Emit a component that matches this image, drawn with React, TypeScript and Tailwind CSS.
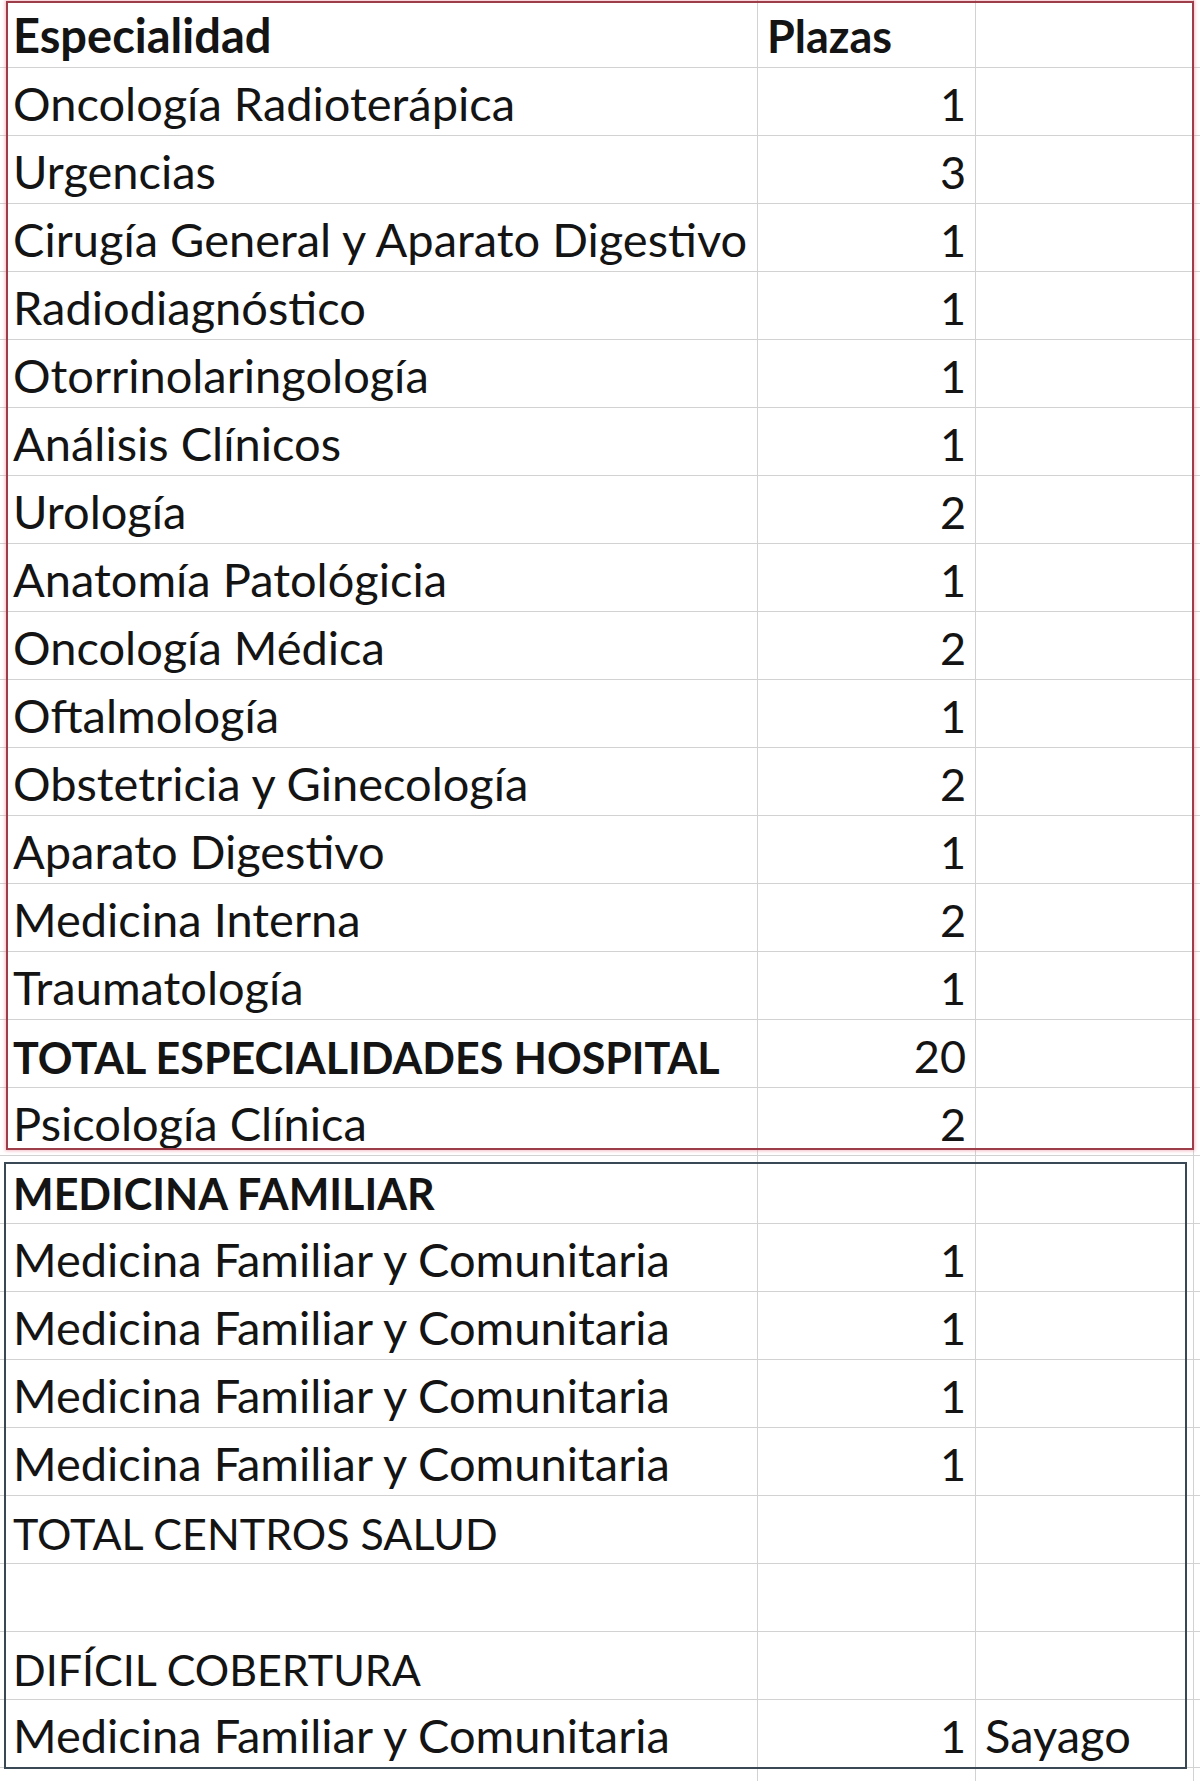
type Row = {
  label: string;
  plazas?: string;
  note?: string;
  bold?: boolean;
  caps?: boolean;
};

const rows: Row[] = [
  { label: "Especialidad", plazas: "Plazas", bold: true },
  { label: "Oncología Radioterápica", plazas: "1" },
  { label: "Urgencias", plazas: "3" },
  { label: "Cirugía General y Aparato Digestivo", plazas: "1" },
  { label: "Radiodiagnóstico", plazas: "1" },
  { label: "Otorrinolaringología", plazas: "1" },
  { label: "Análisis Clínicos", plazas: "1" },
  { label: "Urología", plazas: "2" },
  { label: "Anatomía Patológicia", plazas: "1" },
  { label: "Oncología Médica", plazas: "2" },
  { label: "Oftalmología", plazas: "1" },
  { label: "Obstetricia y Ginecología", plazas: "2" },
  { label: "Aparato Digestivo", plazas: "1" },
  { label: "Medicina Interna", plazas: "2" },
  { label: "Traumatología", plazas: "1" },
  { label: "TOTAL ESPECIALIDADES HOSPITAL", plazas: "20", bold: true, caps: true },
  { label: "Psicología Clínica", plazas: "2" },
  { label: "MEDICINA FAMILIAR", bold: true, caps: true },
  { label: "Medicina Familiar y Comunitaria", plazas: "1" },
  { label: "Medicina Familiar y Comunitaria", plazas: "1" },
  { label: "Medicina Familiar y Comunitaria", plazas: "1" },
  { label: "Medicina Familiar y Comunitaria", plazas: "1" },
  { label: "TOTAL CENTROS SALUD", caps: true },
  { label: "" },
  { label: "DIFÍCIL COBERTURA", caps: true },
  { label: "Medicina Familiar y Comunitaria", plazas: "1", note: "Sayago" },
];

function SheetRow({ row, isHeader }: { row: Row; isHeader: boolean }) {
  const weight = row.bold ? "font-bold" : "font-normal";
  const size = row.caps ? "text-[43px]" : "text-[47px]";
  return (
    <div className="grid grid-cols-[758px_218px_218px_6px] h-[68px] border-b border-[#d2d2d2]">
      <div
        className={`flex items-end pl-[13px] pb-[8px] border-r border-[#d2d2d2] whitespace-nowrap overflow-hidden ${weight} ${size}`}
      >
        {row.label}
      </div>
      <div
        className={`flex items-end pb-[8px] border-r border-[#d2d2d2] text-[45px] ${
          isHeader ? "justify-start pl-[9px] font-bold" : "justify-end pr-[9px]"
        }`}
      >
        {row.plazas}
      </div>
      <div className="flex items-end pl-[9px] pb-[8px] border-r border-[#d2d2d2] whitespace-nowrap overflow-visible text-[47px]">
        {row.note}
      </div>
      <div />
    </div>
  );
}

export default function App() {
  return (
    <div
      className="relative w-[1200px] h-[1781px] bg-white text-[#141414] leading-none overflow-hidden"
      style={{ fontFamily: "Lato, 'Open Sans', sans-serif" }}
    >
      <div className="flex flex-col">
        {rows.map((row, i) => (
          <SheetRow key={i} row={row} isHeader={i === 0} />
        ))}
        <div className="grid grid-cols-[758px_218px_218px_6px] h-[13px]">
          <div className="border-r border-[#d2d2d2]" />
          <div className="border-r border-[#d2d2d2]" />
          <div className="border-r border-[#d2d2d2]" />
          <div />
        </div>
      </div>

      {/* hand-drawn boxes over the sheet */}
      <div className="absolute left-[6px] top-[1px] w-[1188px] h-[1149px] border-2 border-[#9e3d4a] shadow-[0_0_3px_1px_rgba(235,130,150,0.55)] pointer-events-none" />
      <div className="absolute left-[4px] top-[1162px] w-[1183px] h-[607px] border-2 border-[#3a4754] pointer-events-none" />
    </div>
  );
}
